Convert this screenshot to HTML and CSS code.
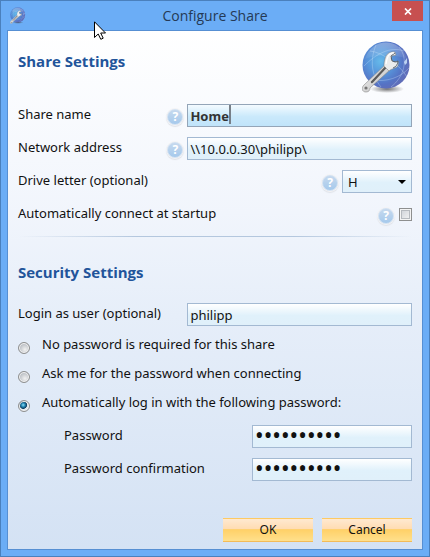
FILE: index.html
```html
<!DOCTYPE html>
<html lang="en">
<head>
    <meta charset="UTF-8">
    <meta name="viewport" content="width=device-width, initial-scale=1.0">
    <title>Configure Share</title>
    <link rel="stylesheet" href="styles.css">
</head>
<body>
    <!-- Shared drawing for the title bar and the header logo -->
    <svg class="defs" width="0" height="0" aria-hidden="true">
        <defs>
            <radialGradient id="globe" cx="38%" cy="42%" r="62%">
                <stop offset="0" stop-color="#66baea"/>
                <stop offset="0.45" stop-color="#5794da"/>
                <stop offset="0.8" stop-color="#5572c4"/>
                <stop offset="1" stop-color="#606db8"/>
            </radialGradient>
            <linearGradient id="gloss" x1="0" y1="0" x2="0" y2="1">
                <stop offset="0" stop-color="#fff" stop-opacity="0.3"/>
                <stop offset="1" stop-color="#fff" stop-opacity="0.05"/>
            </linearGradient>
            <linearGradient id="handle" x1="0" y1="0" x2="1" y2="1">
                <stop offset="0" stop-color="#fff"/>
                <stop offset="0.6" stop-color="#d0d0d0"/>
                <stop offset="1" stop-color="#8a8a8a"/>
            </linearGradient>
            <radialGradient id="shade">
                <stop offset="0" stop-color="#333" stop-opacity="0.7"/>
                <stop offset="1" stop-color="#444" stop-opacity="0"/>
            </radialGradient>
            <symbol id="share-icon" viewBox="0 0 50 52">
                <ellipse cx="25" cy="48" rx="17" ry="4" fill="url(#shade)"/>
                <circle cx="24" cy="24" r="23.5" fill="url(#globe)"/>
                <path d="M3 18C10 -4 38 -4 45 18C33 13 16 13 3 18Z" fill="url(#gloss)"/>
                <g fill="none" stroke="#d3eafc" stroke-opacity="0.4" stroke-width="0.8">
                    <path d="M8 10C20 11 38 24 45 36"/>
                    <path d="M2 25C14 13 28 5 42 10"/>
                    <path d="M14 4C8 18 9 34 19 46"/>
                    <path d="M37 6C47 18 42 36 29 46"/>
                    <path d="M12 39C24 41 38 37 47 27"/>
                </g>
                <path d="M42 21l3-4v5l-2 2z" fill="#d5eafc" fill-opacity="0.8"/>
                <path d="M24 23L2 44C-1 47 0 51 4 51C7 51 8 49 8 47L29 28Z" fill="url(#handle)" stroke="#858585" stroke-width="0.6"/>
                <path d="M23 27L10 41" stroke="#5c5c5c" stroke-width="2.4" stroke-linecap="round"/>
                <path d="M22 26L9 40" stroke="#c9c9c9" stroke-width="0.7"/>
                <path d="M33 11C28 10 24 13 23 18C22 21 22 23 22 25L27 30C29 28 31 28 33 27C36 26 37 23 36 20L32 21L29 18L30 15L34 14Z" fill="#ececec" stroke="#777" stroke-width="0.5"/>
                <path d="M33 12L29 15L30 20L34 21L36 20C36 23 34 26 31 27" fill="none" stroke="#505b68" stroke-width="0.9"/>
                <path d="M32 12C27 11 25 16 24 23" fill="none" stroke="#fff" stroke-width="1.2"/>
                <circle cx="4" cy="47" r="1.600" fill="#777"/>
            </symbol>
        </defs>
    </svg>

    <div class="window">
        <div class="title-bar">
            <svg class="title-icon" aria-hidden="true"><use href="#share-icon"/></svg>
            <h1>Configure Share</h1>
            <button class="close-btn" type="button" aria-label="Close">
                <svg viewBox="0 0 8 7" aria-hidden="true"><path d="M1 0.500L7 6.500M7 0.500L1 6.500"/></svg>
            </button>
        </div>

        <form class="content">
            <div class="heading-row">
                <h2>Share Settings</h2>
                <svg class="logo" aria-hidden="true"><use href="#share-icon"/></svg>
            </div>

            <div class="row">
                <label for="share-name">Share name</label>
                <button class="help" type="button">?</button>
                <div class="field focused">
                    <input class="text-box" type="text" id="share-name" value="Home">
                    <span class="caret"></span>
                </div>
            </div>
            <div class="row">
                <label for="address">Network address</label>
                <button class="help" type="button">?</button>
                <div class="field">
                    <input class="text-box" type="text" id="address" value="\\10.0.0.30\philipp\">
                </div>
            </div>
            <div class="row">
                <label for="drive">Drive letter (optional)</label>
                <button class="help" type="button">?</button>
                <div class="drive">
                    <select class="text-box" id="drive">
                        <option>H</option>
                    </select>
                </div>
            </div>
            <div class="row">
                <label for="startup">Automatically connect at startup</label>
                <button class="help" type="button">?</button>
                <input class="check" type="checkbox" id="startup">
            </div>

            <hr>

            <h2 class="security">Security Settings</h2>
            <div class="row login">
                <label for="user">Login as user (optional)</label>
                <div class="field">
                    <input class="text-box" type="text" id="user" value="philipp">
                </div>
            </div>

            <div class="radios">
                <div class="option">
                    <input class="radio" type="radio" name="mode" id="mode-none">
                    <label for="mode-none">No password is required for this share</label>
                </div>
                <div class="option">
                    <input class="radio" type="radio" name="mode" id="mode-ask">
                    <label for="mode-ask">Ask me for the password when connecting</label>
                </div>
                <div class="option">
                    <input class="radio" type="radio" name="mode" id="mode-auto" checked>
                    <label for="mode-auto">Automatically log in with the following password:</label>
                </div>
            </div>

            <div class="row nested">
                <label for="password">Password</label>
                <input class="text-box password" type="password" id="password" value="philipp123">
            </div>
            <div class="row nested">
                <label for="confirm">Password confirmation</label>
                <input class="text-box password" type="password" id="confirm" value="philipp123">
            </div>

            <div class="buttons">
                <button class="action" type="button">OK</button>
                <button class="action" type="button">Cancel</button>
            </div>
        </form>
    </div>

    <svg class="pointer" viewBox="0 0 12 19" aria-hidden="true">
        <path d="M0.500 0.800V16.500L4.200 13L6.800 18.300L9.200 17.200L6.700 12H11.500Z"/>
    </svg>
</body>
</html>
```
FILE: styles.css
```css
* {
    margin: 0;
    padding: 0;
    box-sizing: border-box;
}

body {
    font-family: "Noto Sans", "Open Sans", sans-serif;
    font-size: 13px;
    line-height: 20px;
    color: #111;
}

button, input, select {
    font: inherit;
    color: inherit;
}

.defs {
    position: absolute;
}

.window {
    display: flex;
    flex-direction: column;
    min-height: 100vh;
    padding: 0 6px 6px;
    background-color: #6badf6;
    border: 1px solid #4a80bd;
}

/* Title bar */
.title-bar {
    display: grid;
    grid-template-columns: 48px 1fr 48px;
    align-items: center;
    height: 29px;
}

.title-icon {
    width: 16px;
    height: 17px;
    margin-left: 3px;
}

h1 {
    text-align: center;
    font-family: "Open Sans", sans-serif;
    font-size: 14px;
    font-weight: normal;
    color: #253a55;
}

.close-btn {
    align-self: start;
    justify-self: end;
    width: 31px;
    height: 20px;
    display: flex;
    align-items: center;
    justify-content: center;
    background-color: #c75050;
    border: none;
}

.close-btn svg {
    width: 8px;
    height: 7px;
    stroke: #fff;
    stroke-width: 1.7;
}

/* Dialog body */
.content {
    flex: 1;
    display: flex;
    flex-direction: column;
    padding: 10px 10px 7px;
    border: 1px solid #568fd3;
    background: linear-gradient(#fff, #f1f5fc 35%, #e6eef9 55%, #d4e2f4);
}

.heading-row {
    display: flex;
    justify-content: space-between;
    height: 63px;
}

h2 {
    font-family: "Open Sans", sans-serif;
    font-size: 15px;
    line-height: 22px;
    font-weight: bold;
    color: #22549a;
}

.heading-row h2 {
    margin-top: 9px;
}

.logo {
    width: 50px;
    height: 52px;
}

.row {
    display: flex;
    align-items: center;
    height: 23px;
    margin-bottom: 10px;
}

.row label {
    flex: 1;
    padding-bottom: 4px;
}

.field {
    position: relative;
    width: 57%;
}

.text-box {
    display: block;
    width: 100%;
    height: 23px;
    padding: 0 2px;
    border: 1px solid #a3b9d2;
    border-radius: 0;
    outline: none;
    background: linear-gradient(#fff, #e0f1fb 55%, #e0f0fa);
}

.focused .text-box {
    font-weight: bold;
    color: #333;
    border-color: #94a5b8;
    background: linear-gradient(#f4fbff, #cae9fb 55%, #c0e4fa);
}

.caret {
    position: absolute;
    top: 1px;
    left: 42px;
    width: 2px;
    height: 19px;
    background-color: #777f88;
}

.help {
    width: 16px;
    height: 16px;
    margin: 2px 4px 0 0;
    border: 1px solid #d3e2f2;
    border-radius: 50%;
    background: linear-gradient(#c6d9ee, #a5c9ec);
    box-shadow: 0 0 0 1px #f3f3f5, 0 1px 1px 1px #dfe3e9;
    font-size: 12px;
    font-weight: bold;
    line-height: 14px;
    color: #fff;
}

.drive {
    position: relative;
    width: 70px;
}

.drive select {
    appearance: none;
    padding-left: 5px;
}

.drive::after {
    content: "";
    position: absolute;
    top: 10px;
    right: 6px;
    border: 4px solid transparent;
    border-top-color: #000;
    border-bottom: none;
    pointer-events: none;
}

.check {
    appearance: none;
    width: 13px;
    height: 13px;
    margin-left: 1px;
    border: 1px solid #8e8f8f;
    background: linear-gradient(135deg, #cbcfd5, #f6f6f6);
    box-shadow: inset 0 0 0 1px #f4f4f4, inset 0 0 0 2px #b6babf;
}

hr {
    height: 1px;
    border: none;
    background: linear-gradient(90deg, transparent, #b4c7de 30%, #b4c7de 70%, transparent);
}

.security {
    margin: 24px 0 20px;
}

.login {
    margin-bottom: 8px;
}

/* Password options */
.radios {
    display: grid;
    gap: 9px;
    margin-bottom: 13px;
}

.option {
    display: flex;
    gap: 12px;
}

.radio {
    appearance: none;
    flex: none;
    width: 12px;
    height: 12px;
    margin-top: 8px;
    border: 1px solid #8e8f8f;
    border-radius: 50%;
    background: radial-gradient(circle at 60% 65%, #f2f2f2, #bfc3c8 60%);
    box-shadow: inset 0 0 0 1px #f4f4f4;
}

.radio:checked {
    background: radial-gradient(circle at 42% 40%, #8fe0f8 0, #2588b4 22%, #0e3f62 42%, #dfe5ea 50%);
}

.nested {
    padding-left: 46px;
}

.row .password {
    width: 160px;
    padding-bottom: 4px;
    font-size: 23px;
}

.buttons {
    display: flex;
    justify-content: flex-end;
    gap: 9px;
    margin-top: auto;
}

.action {
    width: 90px;
    height: 24px;
    border: none;
    border-top: 1px solid #fdca63;
    border-bottom: 1px solid #f3bb58;
    background: linear-gradient(#ffe9d0, #ffdcb2 46%, #ffd067 48%, #ffe08c);
    font-size: 12px;
}

/* Mouse pointer over the title bar */
.pointer {
    position: absolute;
    top: 21px;
    left: 94px;
    width: 12px;
    height: 19px;
    fill: #fff;
    stroke: #000;
    stroke-width: 1;
}
```
